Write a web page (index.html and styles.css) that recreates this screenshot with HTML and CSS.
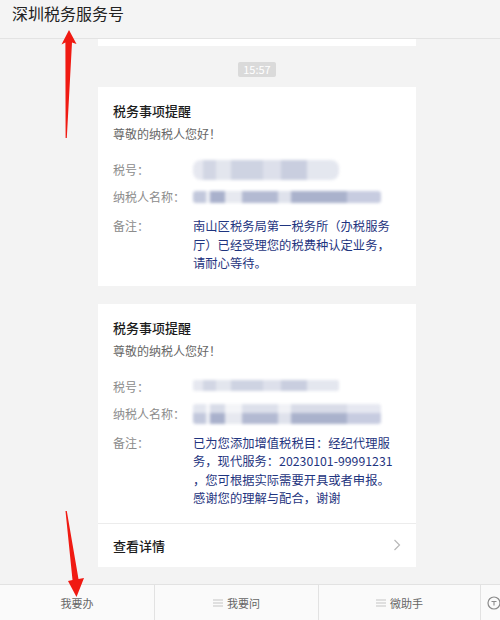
FILE: index.html
```html
<!DOCTYPE html>
<html lang="zh-CN">
<head>
  <meta charset="UTF-8">
  <meta name="viewport" content="width=device-width, initial-scale=1.0">
  <title>深圳税务服务号</title>
  <link rel="stylesheet" href="styles.css">
</head>
<body>

<div class="page">
  <header class="topbar">
    <h1 class="topbar-title">深圳税务服务号</h1>
  </header>

  <main class="chat">
    <div class="card-tail"></div>

    <div class="time"><span>15:57</span></div>

    <div class="card">
      <div class="card-body">
        <div class="card-title">税务事项提醒</div>
        <div class="greet">尊敬的纳税人您好！</div>
        <div class="fields">
          <div class="row">
            <div class="label">税号：</div>
            <div class="value"><div class="blur blur-tax"></div></div>
          </div>
          <div class="row">
            <div class="label">纳税人名称：</div>
            <div class="value"><div class="blur blur-name"></div></div>
          </div>
          <div class="row note">
            <div class="label">备注：</div>
            <div class="value text">南山区税务局第一税务所（办税服务<br>厅）已经受理您的税费种认定业务，<br>请耐心等待。</div>
          </div>
        </div>
      </div>
    </div>

    <div class="card second">
      <div class="card-body">
        <div class="card-title">税务事项提醒</div>
        <div class="greet">尊敬的纳税人您好！</div>
        <div class="fields">
          <div class="row">
            <div class="label">税号：</div>
            <div class="value"><div class="blur blur-tax thin"></div></div>
          </div>
          <div class="row">
            <div class="label">纳税人名称：</div>
            <div class="value"><div class="blur blur-name double"></div></div>
          </div>
          <div class="row note">
            <div class="label">备注：</div>
            <div class="value text">已为您添加增值税税目：经纪代理服<br>务，现代服务：20230101-99991231<br>，您可根据实际需要开具或者申报。<br>感谢您的理解与配合，谢谢</div>
          </div>
        </div>
      </div>
      <div class="card-foot">
        <span>查看详情</span>
        <svg class="chevron" width="8" height="12" viewBox="0 0 8 12">
          <path d="M1.5 1 L6.5 6 L1.5 11" fill="none" stroke="#b8b8b8" stroke-width="1.2"/>
        </svg>
      </div>
    </div>
  </main>

  <nav class="tabbar">
    <div class="tab">我要办</div>
    <div class="tab">
      <svg class="menu-icon" width="10" height="8" viewBox="0 0 10 8">
        <path d="M0 1h10M0 4h10M0 7h10" stroke="#c4c4c4" stroke-width="1"/>
      </svg>我要问
    </div>
    <div class="tab">
      <svg class="menu-icon" width="10" height="8" viewBox="0 0 10 8">
        <path d="M0 1h10M0 4h10M0 7h10" stroke="#c4c4c4" stroke-width="1"/>
      </svg>微助手
    </div>
    <div class="tab tab-icon">
      <svg width="14" height="14" viewBox="0 0 14 14">
        <circle cx="7" cy="7" r="6" fill="none" stroke="#8a8a8a" stroke-width="1.2"/>
        <path d="M4.5 5.5h5M7 5.5v4" stroke="#8a8a8a" stroke-width="1.1"/>
      </svg>
    </div>
  </nav>

  <!-- red annotation arrows drawn over the screenshot -->
  <svg class="arrows" width="500" height="620" viewBox="0 0 500 620">
    <polygon points="69,30 76.5,44 72,42.5 66.8,138 65.6,138 65.4,42.5 61.5,44.5" fill="#f01a12"/>
    <polygon points="65.5,511 66.8,511 78.5,579 84,578 76.5,597 68,581 72.5,580" fill="#f01a12"/>
  </svg>
</div>

</body>
</html>
```

FILE: styles.css
```css
body {
  margin: 0;
  padding: 0;
  font-family: "Noto Sans CJK SC", "Noto Sans", sans-serif;
  background: #f3f3f3;
}
.page {
  position: relative;
  width: 500px;
  height: 620px;
  display: flex;
  flex-direction: column;
  overflow: hidden;
}
.topbar {
  height: 38px;
  border-bottom: 1px solid #e3e3e3;
  background: #f4f4f4;
  padding: 0 12px;
  box-sizing: content-box;
}
.topbar-title {
  margin: 0;
  font-size: 16px;
  font-weight: normal;
  line-height: 26px;
  color: #222;
}
.chat {
  flex: 1;
  display: flex;
  flex-direction: column;
}
.card-tail {
  width: 318px;
  height: 7px;
  margin-left: 98px;
  background: #fff;
}
.time {
  margin-top: 16px;
  width: 318px;
  margin-left: 98px;
  display: flex;
  justify-content: center;
}
.time span {
  background: #dadada;
  color: #fff;
  font-size: 11px;
  line-height: 15px;
  padding: 0 5px;
  border-radius: 2px;
}
.card {
  width: 318px;
  margin-left: 98px;
  margin-top: 10px;
  background: #fff;
}
.card.second {
  margin-top: 18px;
}
.card-body {
  padding: 14px 15px 13px;
}
.second .card-body {
  padding-bottom: 15px;
}
.card-title {
  font-size: 13px;
  line-height: 20px;
  color: #1c1c1c;
  font-weight: 500;
}
.greet {
  margin-top: 3px;
  font-size: 12px;
  line-height: 20px;
  color: #666;
}
.fields {
  margin-top: 16px;
}
.row {
  display: flex;
  font-size: 12px;
  line-height: 20px;
}
.row + .row {
  margin-top: 7px;
}
.row.note {
  margin-top: 10px;
  line-height: 18.5px;
}
.label {
  width: 80px;
  flex-shrink: 0;
  color: #8c8c8c;
}
.value {
  flex: 1;
  display: flex;
  align-items: center;
}
.value.text {
  display: block;
  color: #1f3580;
  font-size: 12.3px;
  white-space: nowrap;
}
.blur {
  filter: blur(1.6px);
  border-radius: 8px;
}
.blur-tax {
  width: 146px;
  height: 20px;
  background: linear-gradient(to right,
    #e6e8f0 0 7%, #d2d6e4 7% 16%, #e3e6ee 16% 26%, #ced3e2 26% 48%,
    #dde0eb 48% 60%, #c9cedf 60% 78%, #e4e7ef 78% 100%);
}
.blur-tax.thin {
  height: 11px;
  border-radius: 2px;
  margin-top: -2px;
}
.blur-name {
  width: 188px;
  height: 12px;
  border-radius: 3px;
  background: linear-gradient(to right,
    #c2c8dc 0 7%, #eef0f5 7% 9%, #a9b1cc 9% 17%, #e7e9f0 17% 26%,
    #b3bad2 26% 45%, #dfe2ec 45% 52%, #aab2cc 52% 82%, #c7cce0 82% 100%);
}
.blur-name.double {
  height: 20px;
  background:
    linear-gradient(to bottom, rgba(255,255,255,0.55) 0 45%, rgba(255,255,255,0) 45% 100%),
    linear-gradient(to right,
    #c2c8dc 0 7%, #eef0f5 7% 9%, #a9b1cc 9% 17%, #e7e9f0 17% 26%,
    #b3bad2 26% 45%, #dfe2ec 45% 52%, #aab2cc 52% 82%, #c7cce0 82% 100%);
}
.card-foot {
  height: 43px;
  border-top: 1px solid #ececec;
  padding: 0 15px;
  display: flex;
  align-items: center;
  justify-content: space-between;
  font-size: 13px;
  color: #1c1c1c;
  font-weight: 500;
}
.tabbar {
  height: 35px;
  border-top: 1px solid #e2e2e2;
  background: #fafafa;
  display: grid;
  grid-template-columns: 155px 164px 162px 1fr;
}
.tab {
  display: flex;
  align-items: center;
  justify-content: center;
  gap: 4px;
  font-size: 11px;
  color: #666;
  border-right: 1px solid #e2e2e2;
}
.tab-icon {
  border-right: none;
  justify-content: flex-start;
  padding-left: 6px;
}
.arrows {
  position: absolute;
  left: 0;
  top: 0;
  pointer-events: none;
}
```
